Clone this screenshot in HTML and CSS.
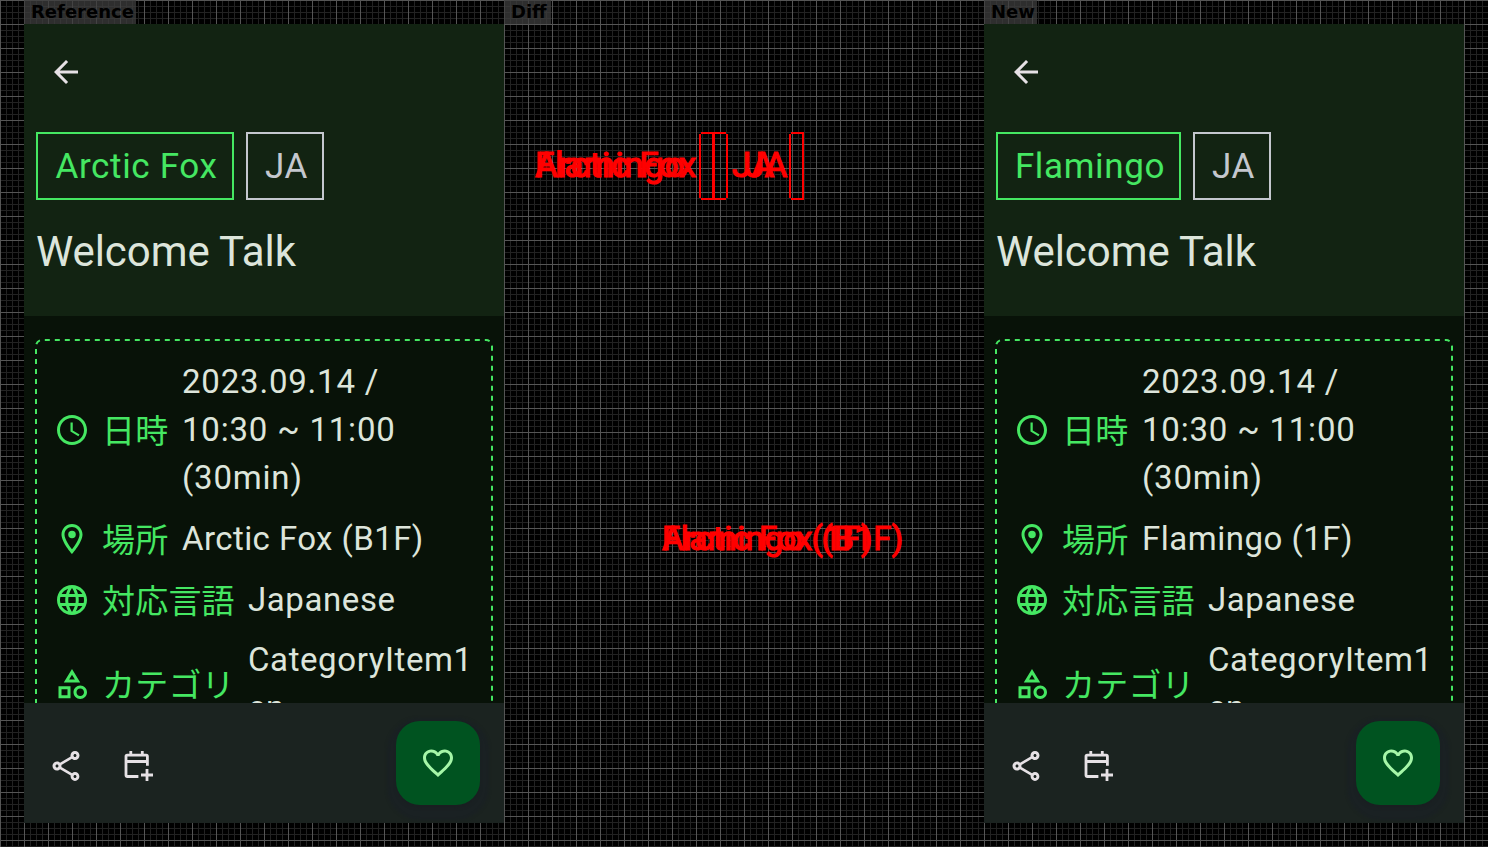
FILE: index.html
```
<!DOCTYPE html>
<html lang="ja">
<head>
<meta charset="utf-8">
<title>Screenshot comparison</title>
<link rel="stylesheet" href="styles.css">
</head>
<body>
<svg class="defs" aria-hidden="true">
  <symbol id="back" viewBox="0 0 24 24"><path d="M20 11H7.83l5.59-5.59L12 4l-8 8 8 8 1.41-1.41L7.83 13H20z"/></symbol>
  <symbol id="clock" viewBox="0 0 24 24"><path d="M11.99 2C6.47 2 2 6.48 2 12s4.47 10 9.99 10C17.52 22 22 17.52 22 12S17.52 2 11.99 2zM12 20c-4.42 0-8-3.58-8-8s3.58-8 8-8 8 3.58 8 8-3.58 8-8 8zm.5-13H11v6l5.25 3.15.75-1.23-4.5-2.67z"/></symbol>
  <symbol id="place" viewBox="0 0 24 24"><path d="M12 2C8.13 2 5 5.13 5 9c0 5.25 7 13 7 13s7-7.75 7-13c0-3.87-3.13-7-7-7zM7 9c0-2.76 2.24-5 5-5s5 2.24 5 5c0 2.88-2.88 7.19-5 9.88C9.92 16.21 7 11.85 7 9z"/><circle cx="12" cy="9" r="2.5"/></symbol>
  <symbol id="globe" viewBox="0 0 24 24"><path d="M11.99 2C6.47 2 2 6.48 2 12s4.47 10 9.99 10C17.52 22 22 17.52 22 12S17.52 2 11.99 2zm6.93 6h-2.95c-.32-1.25-.78-2.45-1.38-3.56 1.84.63 3.37 1.91 4.33 3.56zM12 4.04c.83 1.2 1.48 2.53 1.91 3.96h-3.82c.43-1.43 1.08-2.76 1.91-3.96zM4.26 14C4.1 13.36 4 12.69 4 12s.1-1.36.26-2h3.38c-.08.66-.14 1.32-.14 2s.06 1.34.14 2H4.26zm.82 2h2.95c.32 1.25.78 2.45 1.38 3.56-1.84-.63-3.37-1.9-4.33-3.56zm2.95-8H5.08c.96-1.66 2.49-2.93 4.33-3.56C8.81 5.55 8.35 6.75 8.03 8zM12 19.96c-.83-1.2-1.48-2.53-1.91-3.96h3.82c-.43 1.43-1.08 2.76-1.91 3.96zM14.34 14H9.66c-.09-.66-.16-1.32-.16-2s.07-1.35.16-2h4.68c.09.65.16 1.32.16 2s-.07 1.34-.16 2zm.25 5.56c.6-1.11 1.06-2.31 1.38-3.56h2.95c-.96 1.65-2.49 2.93-4.33 3.56zM16.36 14c.08-.66.14-1.32.14-2s-.06-1.34-.14-2h3.38c.16.64.26 1.31.26 2s-.1 1.36-.26 2h-3.38z"/></symbol>
  <symbol id="category" viewBox="0 0 24 24"><path d="M12 2l-5.5 9h11L12 2zm0 3.84L13.93 9h-3.87L12 5.84zM17.5 13c-2.49 0-4.5 2.01-4.5 4.5s2.01 4.5 4.5 4.5 4.5-2.01 4.5-4.5-2.01-4.5-4.5-4.5zm0 7c-1.38 0-2.5-1.12-2.5-2.5s1.12-2.5 2.5-2.5 2.5 1.12 2.5 2.5-1.12 2.5-2.5 2.5zM3 21.5h8v-8H3v8zm2-6h4v4H5v-4z"/></symbol>
  <symbol id="share" viewBox="0 0 24 24"><path d="M18 16.08c-.76 0-1.44.3-1.96.77L8.91 12.7c.05-.23.09-.46.09-.7s-.04-.47-.09-.7l7.05-4.11c.54.5 1.25.81 2.04.81 1.66 0 3-1.34 3-3s-1.34-3-3-3-3 1.34-3 3c0 .24.04.47.09.7L8.04 9.81C7.5 9.31 6.79 9 6 9c-1.66 0-3 1.34-3 3s1.34 3 3 3c.79 0 1.5-.31 2.04-.81l7.12 4.16c-.05.21-.08.43-.08.65 0 1.61 1.31 2.92 2.92 2.92s2.92-1.31 2.92-2.92-1.31-2.92-2.92-2.92zM18 4c.55 0 1 .45 1 1s-.45 1-1 1-1-.45-1-1 .45-1 1-1zM6 13c-.55 0-1-.45-1-1s.45-1 1-1 1 .45 1 1-.45 1-1 1zm12 7.02c-.55 0-1-.45-1-1s.45-1 1-1 1 .45 1 1-.45 1-1 1z"/></symbol>
  <symbol id="calendar" viewBox="0 0 36 36"><path fill="none" stroke="currentColor" stroke-width="2.8" d="M18.4 28.5H7.2Q6 28.5 6 27.3V8.3Q6 7.1 7.2 7.1H26.2Q27.4 7.1 27.4 8.3V17.8M6 13.5H27.4M10.8 3V7.5M22.3 3V7.5M27 21V33M21 27H33"/></symbol>
  <symbol id="heart" viewBox="0 0 24 24"><path d="M16.5 3c-1.74 0-3.41.81-4.5 2.09C10.91 3.81 9.24 3 7.5 3 4.42 3 2 5.42 2 8.5c0 3.78 3.4 6.86 8.55 11.54L12 21.35l1.45-1.32C18.6 15.36 22 12.28 22 8.5 22 5.42 19.58 3 16.5 3zm-4.4 15.55l-.1.1-.1-.1C7.14 14.24 4 11.39 4 8.5 4 6.5 5.5 5 7.5 5c1.54 0 3.04.99 3.57 2.36h1.87C13.46 5.99 14.96 5 16.5 5c2 0 3.5 1.5 3.5 3.5 0 2.89-3.14 5.74-7.9 10.05z"/></symbol>
  <symbol id="dashes" viewBox="0 0 480 387"><path fill="none" stroke="currentColor" stroke-width="2" stroke-dasharray="5 5" d="M12 388V30A6 6 0 0 1 18 24H462A6 6 0 0 1 468 30V388"/></symbol>
</svg>

<main class="board">
  <section class="column">
    <h2 class="label label-reference">Reference</h2>
    <article class="phone">
      <header class="hero">
        <div class="topbar"><svg class="icon"><use href="#back"/></svg></div>
        <div class="chips"><span class="chip room-fox">Arctic Fox</span><span class="chip lang">JA</span></div>
        <h1 class="title">Welcome Talk</h1>
      </header>
      <div class="content">
        <svg class="dashes"><use href="#dashes"/></svg>
        <div class="info">
          <div class="row"><svg class="icon"><use href="#clock"/></svg><span class="key">日時</span><span class="value date">2023.09.14 /<br>10:30 ~ 11:00<br>(30min)</span></div>
          <div class="row"><svg class="icon"><use href="#place"/></svg><span class="key">場所</span><span class="value fox">Arctic Fox (B1F)</span></div>
          <div class="row"><svg class="icon"><use href="#globe"/></svg><span class="key">対応言語</span><span class="value">Japanese</span></div>
          <div class="row"><svg class="icon"><use href="#category"/></svg><span class="key">カテゴリ</span><span class="value">CategoryItem1<br>en</span></div>
        </div>
      </div>
      <footer class="actions">
        <svg class="icon"><use href="#share"/></svg>
        <svg class="icon"><use href="#calendar"/></svg>
        <span class="fab"><svg class="icon"><use href="#heart"/></svg></span>
      </footer>
    </article>
  </section>

  <section class="column">
    <h2 class="label label-diff">Diff</h2>
    <div class="diff">
      <span class="mark chip-text">Arctic Fox</span>
      <span class="mark chip-text">Flamingo</span>
      <span class="mark chip-text ja-left">JA</span>
      <span class="mark chip-text ja-right">JA</span>
      <svg class="edges" viewBox="0 0 480 68" shape-rendering="crispEdges"><path d="M195 2h2v64h-2zM208 2h3v64h-3zM222 2h2v64h-2zM197 0h25v2h-25zM197 66h25v2h-25zM285 2h2v64h-2zM298 0h2v68h-2zM287 0h11v2h-11zM287 66h11v2h-11z"/></svg>
      <span class="mark place-text fox">Arctic Fox (B1F)</span>
      <span class="mark place-text flamingo">Flamingo (1F)</span>
    </div>
  </section>

  <section class="column">
    <h2 class="label label-new">New</h2>
    <article class="phone">
      <header class="hero">
        <div class="topbar"><svg class="icon"><use href="#back"/></svg></div>
        <div class="chips"><span class="chip room-flamingo">Flamingo</span><span class="chip lang">JA</span></div>
        <h1 class="title">Welcome Talk</h1>
      </header>
      <div class="content">
        <svg class="dashes"><use href="#dashes"/></svg>
        <div class="info">
          <div class="row"><svg class="icon"><use href="#clock"/></svg><span class="key">日時</span><span class="value date">2023.09.14 /<br>10:30 ~ 11:00<br>(30min)</span></div>
          <div class="row"><svg class="icon"><use href="#place"/></svg><span class="key">場所</span><span class="value flamingo">Flamingo (1F)</span></div>
          <div class="row"><svg class="icon"><use href="#globe"/></svg><span class="key">対応言語</span><span class="value">Japanese</span></div>
          <div class="row"><svg class="icon"><use href="#category"/></svg><span class="key">カテゴリ</span><span class="value">CategoryItem1<br>en</span></div>
        </div>
      </div>
      <footer class="actions">
        <svg class="icon"><use href="#share"/></svg>
        <svg class="icon"><use href="#calendar"/></svg>
        <span class="fab"><svg class="icon"><use href="#heart"/></svg></span>
      </footer>
    </article>
  </section>
</main>
</body>
</html>
```

FILE: styles.css
```
* { box-sizing: border-box; }

body {
  margin: 0;
  width: 1488px;
  height: 847px;
  overflow: hidden;
  background-color: #000;
  background-image:
    linear-gradient(#555 1px, transparent 1px),
    linear-gradient(90deg, #555 1px, transparent 1px),
    linear-gradient(#222 1px, transparent 1px),
    linear-gradient(90deg, #222 1px, transparent 1px);
  background-size: 24px 24px, 24px 24px, 6px 6px, 6px 6px;
  font-family: Roboto, "Noto Sans CJK JP", sans-serif;
}

.defs { display: none; }
.board { display: flex; padding: 0 24px; height: 847px; }
.column { width: 480px; display: flex; flex-direction: column; align-items: flex-start; }

.label {
  margin: 0;
  height: 24px;
  padding-left: 7px;
  background: rgba(62, 62, 62, .75);
  color: #000;
  font: bold 18px/24px "DejaVu Sans", sans-serif;
  white-space: nowrap;
}
.label-reference { width: 112px; }
.label-diff { width: 47px; }
.label-new { width: 53px; }

.phone {
  width: 480px;
  height: 799px;
  display: flex;
  flex-direction: column;
  overflow: hidden;
  background: #081208;
  color: #dde5db;
}
.icon { width: 36px; height: 36px; flex: none; fill: currentColor; display: block; }

.hero { height: 292px; background: #122312; padding: 0 12px; }
.topbar { height: 96px; padding-left: 12px; display: flex; align-items: center; color: #e6e1e5; }
.chips { display: flex; gap: 12px; margin-top: 12px; }
.chip {
  height: 68px;
  border: 2px solid;
  padding-left: 3px;
  display: flex;
  align-items: center;
  justify-content: center;
  font-size: 35px;
  letter-spacing: .65px;
  white-space: nowrap;
}
.room-fox, .room-flamingo { color: #45e762; }
.room-fox { width: 198px; }
.room-flamingo { width: 185px; }
.lang { width: 78px; color: #c4c7ce; }
.title { margin: 24px 0 0; font-size: 42px; line-height: 56px; letter-spacing: -.08px; font-weight: 400; white-space: nowrap; }

.content { height: 387px; position: relative; overflow: hidden; }
.dashes { position: absolute; left: 0; top: 0; width: 480px; height: 387px; color: #45e762; }
.info { padding: 42px 18px 0 30px; display: flex; flex-direction: column; gap: 12px; }
.row { display: flex; align-items: center; min-height: 49px; color: #45e762; }
.key {
  margin-left: 12px;
  width: 80px;
  padding-bottom: 2px;
  flex: none;
  font: 33px/46px "Noto Sans CJK JP", sans-serif;
  letter-spacing: .2px;
  white-space: nowrap;
}
.row:nth-child(n+3) .key { width: 146px; }
.value { color: #dde5db; font-size: 33px; line-height: 48px; letter-spacing: .6px; white-space: nowrap; }
.value.date { letter-spacing: .8px; }
.value.fox, .mark.fox { letter-spacing: .42px; }
.value.flamingo, .mark.flamingo { letter-spacing: .5px; }

.actions {
  height: 120px;
  flex: none;
  display: flex;
  align-items: center;
  gap: 36px;
  padding: 6px 24px 0;
  background: #1b2320;
  color: #e6e1e5;
}
.fab {
  margin: -6px 0 0 auto;
  width: 84px;
  height: 84px;
  border-radius: 24px;
  display: flex;
  align-items: center;
  justify-content: center;
  background: #005320;
  color: #a5f6a8;
  box-shadow: 0 3px 3px #1a1f22, 0 6px 3px 9px #1a2123;
}

.diff { width: 480px; height: 799px; position: relative; color: #f00; }
.mark { position: absolute; white-space: nowrap; line-height: 48px; -webkit-text-stroke: 1.2px #f00; }
.chip-text { left: 31px; top: 118px; font-size: 35px; letter-spacing: .65px; }
.ja-left { left: 228px; }
.ja-right { left: 241px; }
.place-text { left: 158px; top: 491px; font-size: 33px; }
.edges { position: absolute; left: 0; top: 108px; width: 480px; height: 68px; fill: #f00; }
```
